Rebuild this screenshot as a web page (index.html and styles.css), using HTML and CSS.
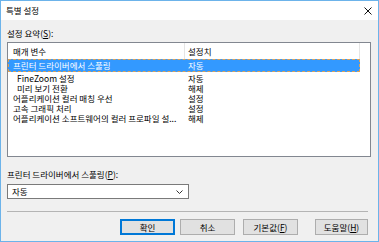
FILE: index.html
```html
<!DOCTYPE html>
<html>
<head>
	<meta charset="utf-8" />
	<title>특별 설정</title>
	<link rel="stylesheet" href="styles.css">
</head>
<body>
	<div class="window">
		<div class="titlebar">
			<span class="title">특별 설정</span>
			<svg class="close" width="8" height="8" viewBox="0 0 8 8"><path d="M0.5 0.5L7.5 7.5M7.5 0.5L0.5 7.5" stroke="#111" stroke-width="1"/></svg>
		</div>
		<div class="main">
			<p class="label">설정 요약(<u>S</u>):</p>
			<div class="listbox">
				<div class="head"><div class="c1">매개 변수</div><div class="c2">설정치</div><div class="fill"></div></div>
				<div class="row sel"><div class="c1">프린터 드라이버에서 스풀링</div><div class="c2">자동</div></div>
				<div class="row"><div class="c1 sub">FineZoom 설정</div><div class="c2">자동</div></div>
				<div class="row"><div class="c1 sub">미리 보기 전환</div><div class="c2">해제</div></div>
				<div class="row"><div class="c1">어플리케이션 컬러 매칭 우선</div><div class="c2">설정</div></div>
				<div class="row"><div class="c1">고속 그래픽 처리</div><div class="c2">설정</div></div>
				<div class="row"><div class="c1">어플리케이션 소프트웨어의 컬러 프로파일 설...</div><div class="c2">해제</div></div>
			</div>
			<p class="label label2">프린터 드라이버에서 스풀링(<u>P</u>):</p>
			<div class="select">
				<span>자동</span>
				<svg width="7" height="4" viewBox="0 0 7 4"><path d="M0.5 0.5L3.5 3.5L6.5 0.5" fill="none" stroke="#333" stroke-width="1"/></svg>
			</div>
			<div class="sep"></div>
			<div class="buttons">
				<button class="btn default">확인</button>
				<button class="btn b2">취소</button>
				<button class="btn b3">기본값(<u>F</u>)</button>
				<button class="btn b4">도움말(<u>H</u>)</button>
			</div>
		</div>
	</div>
</body>
</html>
```

FILE: styles.css
```css
* { margin:0; padding:0; box-sizing:border-box; }
body { font-family:"Noto Sans CJK KR", "Noto Sans", sans-serif; font-size:8.5px; color:#000; background:#fff; }
u { text-decoration:underline; text-underline-offset:1px; }

.window { width:379px; height:242px; border:1px solid #6cb3ea; display:flex; flex-direction:column; background:#f0f0f0; }
.titlebar { height:19px; background:#fff; display:flex; align-items:center; justify-content:space-between; padding:0 6px 0 5px; }
.title { font-size:8.5px; line-height:19px; }

.main { flex:1; padding:7px 7px 0 6px; }
.label { line-height:12px; height:12px; }
.label2 { margin-top:11px; }

.listbox { margin-top:3px; height:115px; border:1px solid #828790; background:#fff; }
.head { display:flex; height:16px; line-height:16px; }
.head .c1 { border-right:1px solid #e5e5e5; }
.head .c2 { border-right:1px solid #e5e5e5; }
.head .fill { flex:1; }
.c1 { width:177px; padding-left:5px; white-space:nowrap; overflow:hidden; }
.c2 { width:175px; padding-left:3px; white-space:nowrap; }
.sub { padding-left:9px; }
.row { display:flex; width:352px; height:10px; line-height:10px; }
.row.sel { height:13px; line-height:13px; margin-bottom:1px; background:#3399ff; color:#fff; outline:1px dashed #d9a15a; outline-offset:-1px; }

.select { margin-top:4px; width:182px; height:15px; border:1px solid #7a7a7a; background:#fff; display:flex; align-items:center; justify-content:space-between; padding:0 5px 0 4px; line-height:13px; }

.sep { margin-top:12px; margin-right:3px; height:1px; background:#b4b4b4; }

.buttons { margin-top:7px; margin-right:3px; display:flex; justify-content:flex-end; }
.btn { font-family:inherit; font-size:8.5px; color:#000; height:16px; width:55px; background:#e1e1e1; border:1px solid #adadad; line-height:14px; }
.btn.default { border:2px solid #0078d7; line-height:12px; }
.b2 { margin-left:5px; }
.b3 { margin-left:8px; }
.b4 { margin-left:17px; width:53px; }
```
